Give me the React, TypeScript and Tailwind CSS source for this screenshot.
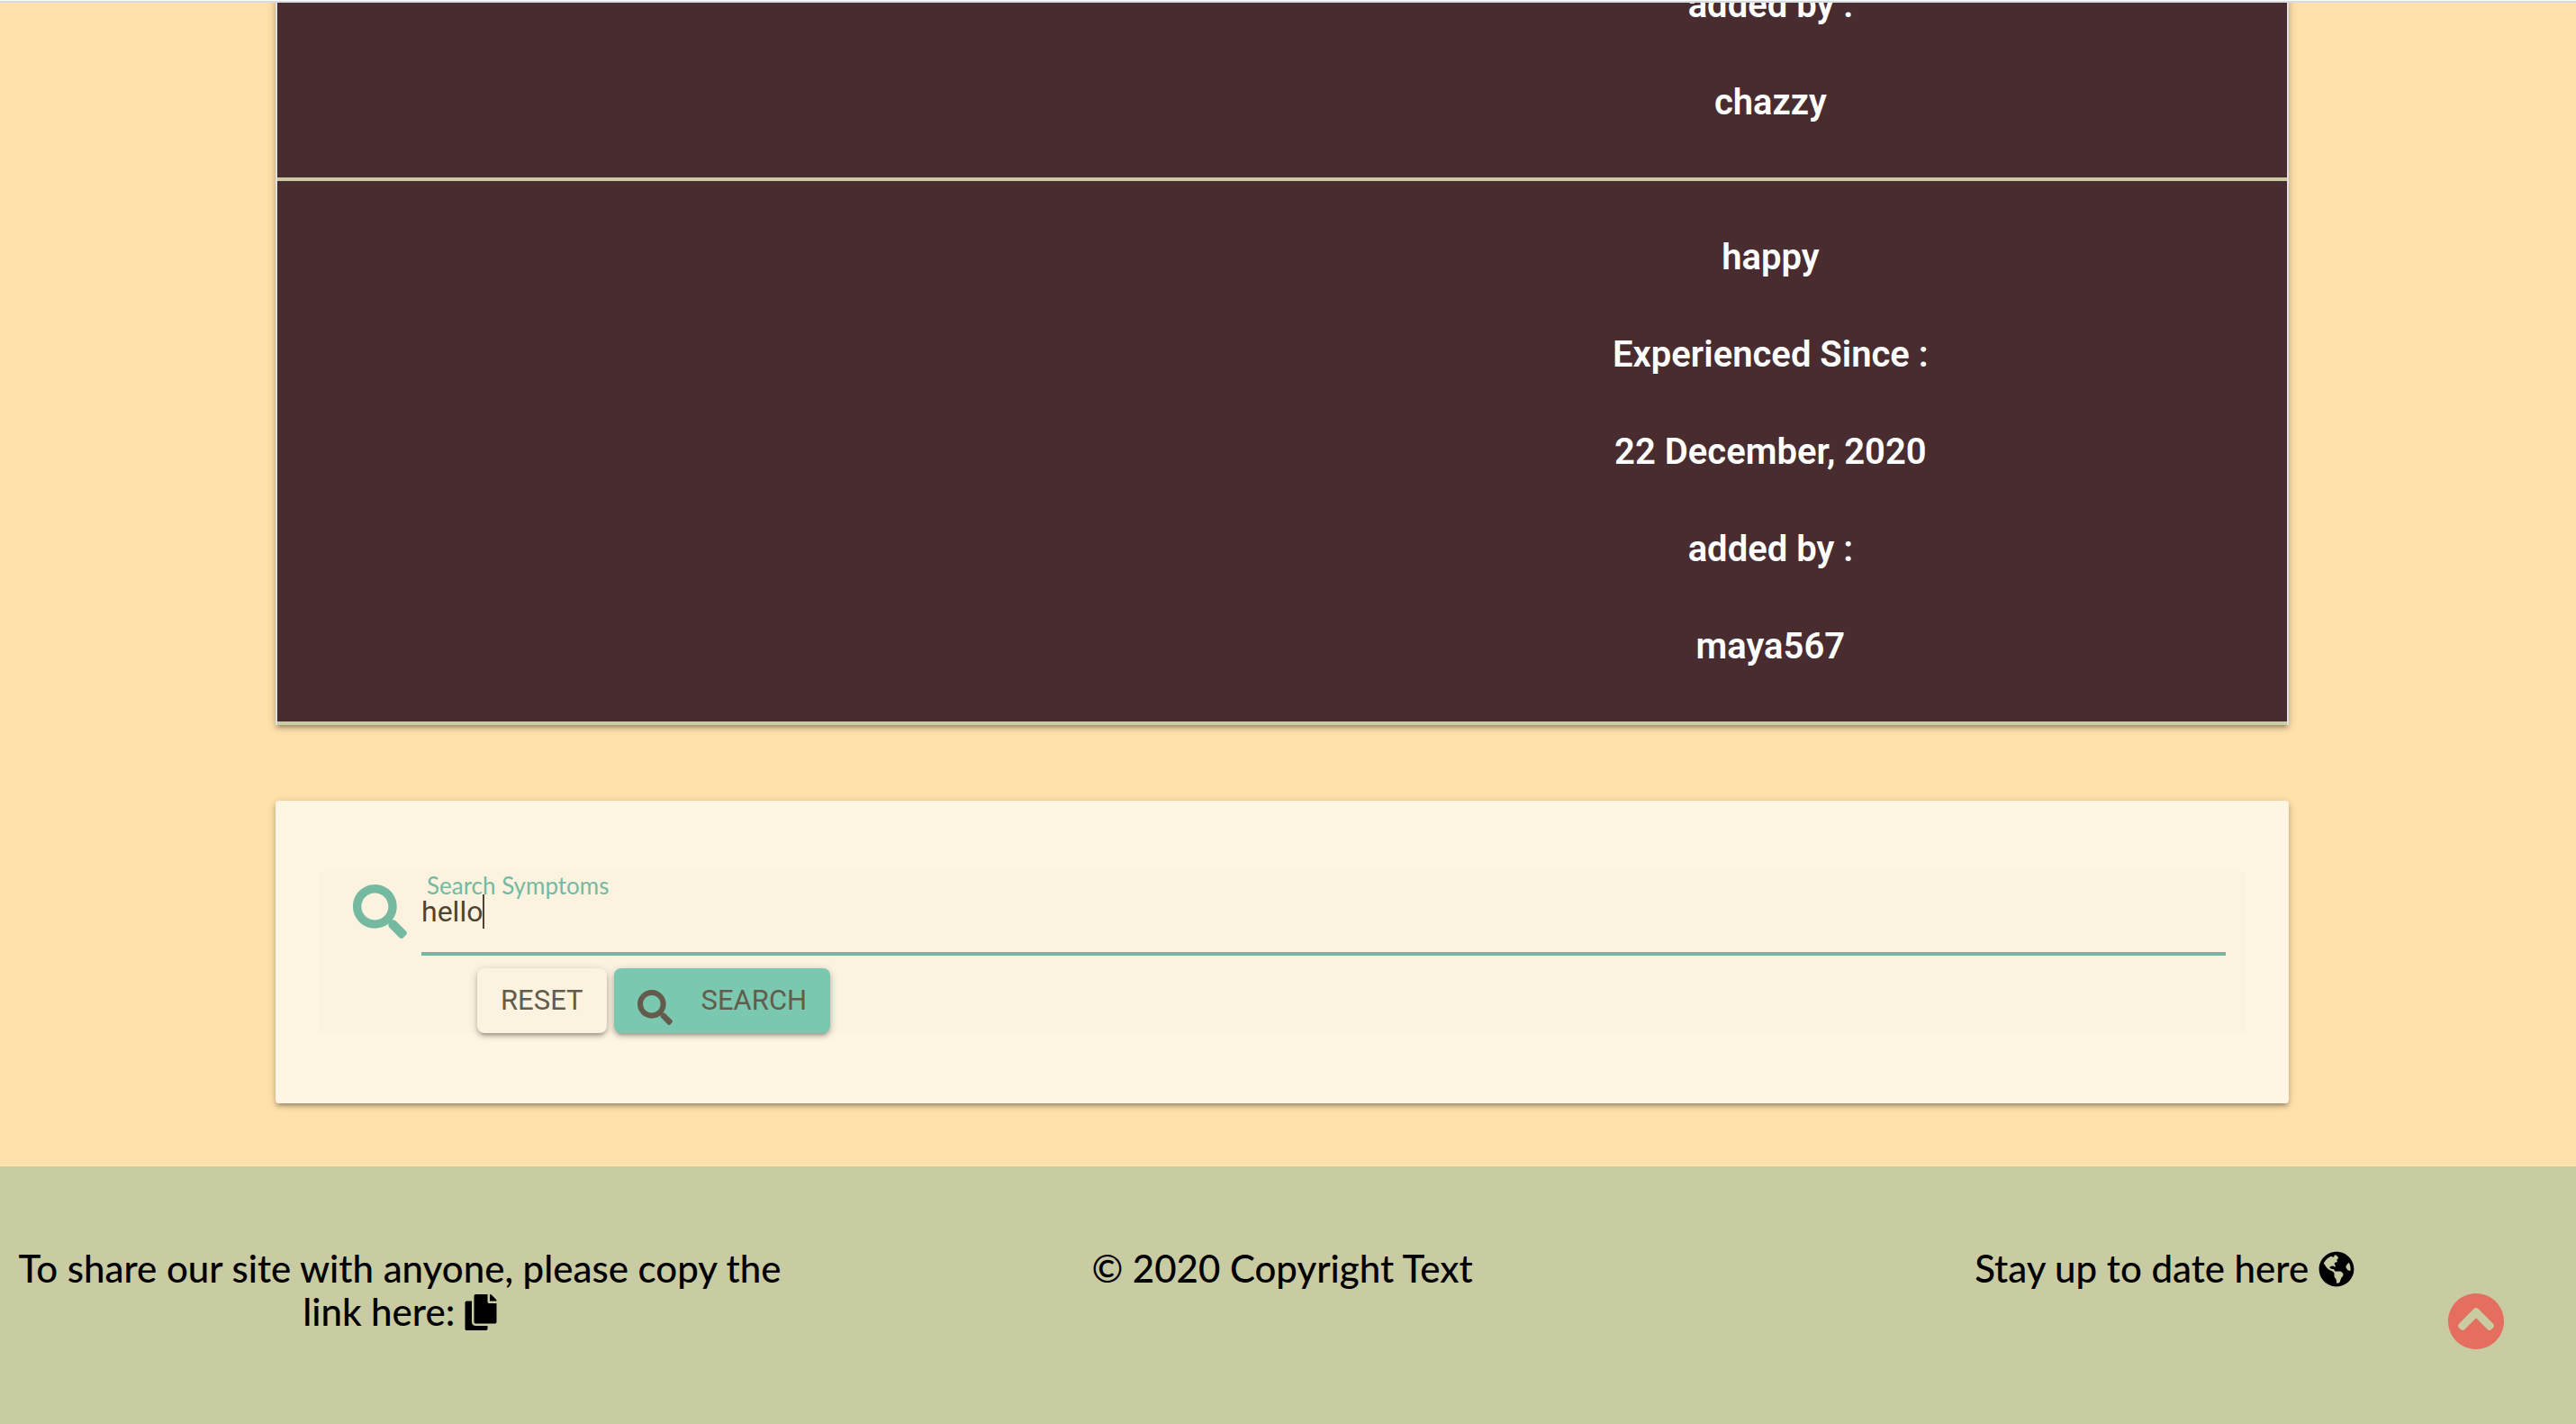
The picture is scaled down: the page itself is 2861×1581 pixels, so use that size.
import React from "react";
import { FaSearch, FaCopy, FaGlobeAmericas, FaChevronCircleUp } from "react-icons/fa";

const entries = [
  { id: "previous", lines: ["added by :", "chazzy"] },
  { id: "happy", lines: ["happy", "Experienced Since :", "22 December, 2020", "added by :", "maya567"] },
];

function SymptomList() {
  return (
    <ul className="-mt-[27px] border-x-2 border-[#e0e0e0] bg-[#482c30] shadow-[0_4px_4px_rgba(0,0,0,0.14),0_6px_2px_-4px_rgba(0,0,0,0.12),0_2px_10px_rgba(0,0,0,0.2)]">
      {entries.map((entry) => (
        <li
          key={entry.id}
          className="flex justify-end border-b-4 border-[#c9cba3] pt-[55px] pb-[53px] first:pt-0"
        >
          <div className="flex w-[51.4%] flex-col gap-12 text-center text-[40px] leading-[60px] font-semibold text-white">
            {entry.lines.map((line) => (
              <p key={line}>{line}</p>
            ))}
          </div>
        </li>
      ))}
    </ul>
  );
}

function SearchCard() {
  return (
    <section className="mt-[84px] rounded bg-[#fff5e3] px-12 py-[78px] shadow-[0_4px_4px_rgba(0,0,0,0.14),0_6px_2px_-4px_rgba(0,0,0,0.12),0_2px_10px_rgba(0,0,0,0.2)]">
      <form className="bg-[#fcf2e0]" onSubmit={(e) => e.preventDefault()}>
        <div className="flex gap-4 pr-[22px] pl-[38px]">
          <FaSearch className="mt-[15px] size-[60px] shrink-0 text-[#75baa0]" />
          <div className="relative grow">
            <label
              htmlFor="symptoms"
              className="absolute top-0 left-1.5 font-[Lato] text-[26px] leading-8 text-[#75baa0]"
            >
              Search Symptoms
            </label>
            <input
              id="symptoms"
              type="text"
              defaultValue="hello"
              className="block h-[94px] w-full border-b-4 border-[#75baa0] bg-transparent text-[32px] text-[#4d4430] caret-transparent outline-none"
            />
            <span className="absolute top-[26px] left-[68px] h-[38px] w-0.5 bg-[#4d4430]" />
          </div>
        </div>
        <div className="mt-[14px] flex gap-2 pl-44 text-[31px] text-[#635c4c]">
          <button
            type="reset"
            className="h-[72px] rounded-lg bg-[#fcf2e0] px-[26px] shadow-[0_4px_4px_rgba(0,0,0,0.14),0_6px_2px_-4px_rgba(0,0,0,0.12),0_2px_10px_rgba(0,0,0,0.2)]"
          >
            RESET
          </button>
          <button
            type="submit"
            className="flex h-[72px] items-center gap-8 rounded-lg bg-[#7bc8b0] px-[26px] shadow-[0_4px_4px_rgba(0,0,0,0.14),0_6px_2px_-4px_rgba(0,0,0,0.12),0_2px_10px_rgba(0,0,0,0.2)]"
          >
            <FaSearch className="mt-[14px] size-[39px]" />
            SEARCH
          </button>
        </div>
      </form>
    </section>
  );
}

function Footer() {
  return (
    <footer className="mt-[70px] grow bg-[#c9cba3] pt-[89px] pr-[13px] font-[Lato] text-[42px] leading-[48px] font-medium text-black">
      <div className="grid grid-cols-3 gap-[92px] text-center">
        <p>
          To share our site with anyone, please copy the link here:{" "}
          <a href="#copy" aria-label="Copy link">
            <FaCopy className="inline h-10 w-9 align-[-5px]" />
          </a>
        </p>
        <p>© 2020 Copyright Text</p>
        <p>
          Stay up to date here{" "}
          <a href="#news" aria-label="News">
            <FaGlobeAmericas className="inline size-10 align-[-5px]" />
          </a>
        </p>
      </div>
    </footer>
  );
}

export default function App() {
  return (
    <div className="flex h-screen flex-col overflow-hidden bg-[#ffe1ab] font-[Roboto]">
      <div className="relative z-10 h-[3px] shrink-0 border-b-2 border-[#d5dbdf] bg-white" />
      <main className="pr-[319px] pl-[306px]">
        <SymptomList />
        <SearchCard />
      </main>
      <Footer />
      <a
        href="#top"
        aria-label="Back to top"
        className="fixed right-[79px] bottom-[82px] text-[#e56f5e]"
      >
        <FaChevronCircleUp className="size-16" />
      </a>
    </div>
  );
}
